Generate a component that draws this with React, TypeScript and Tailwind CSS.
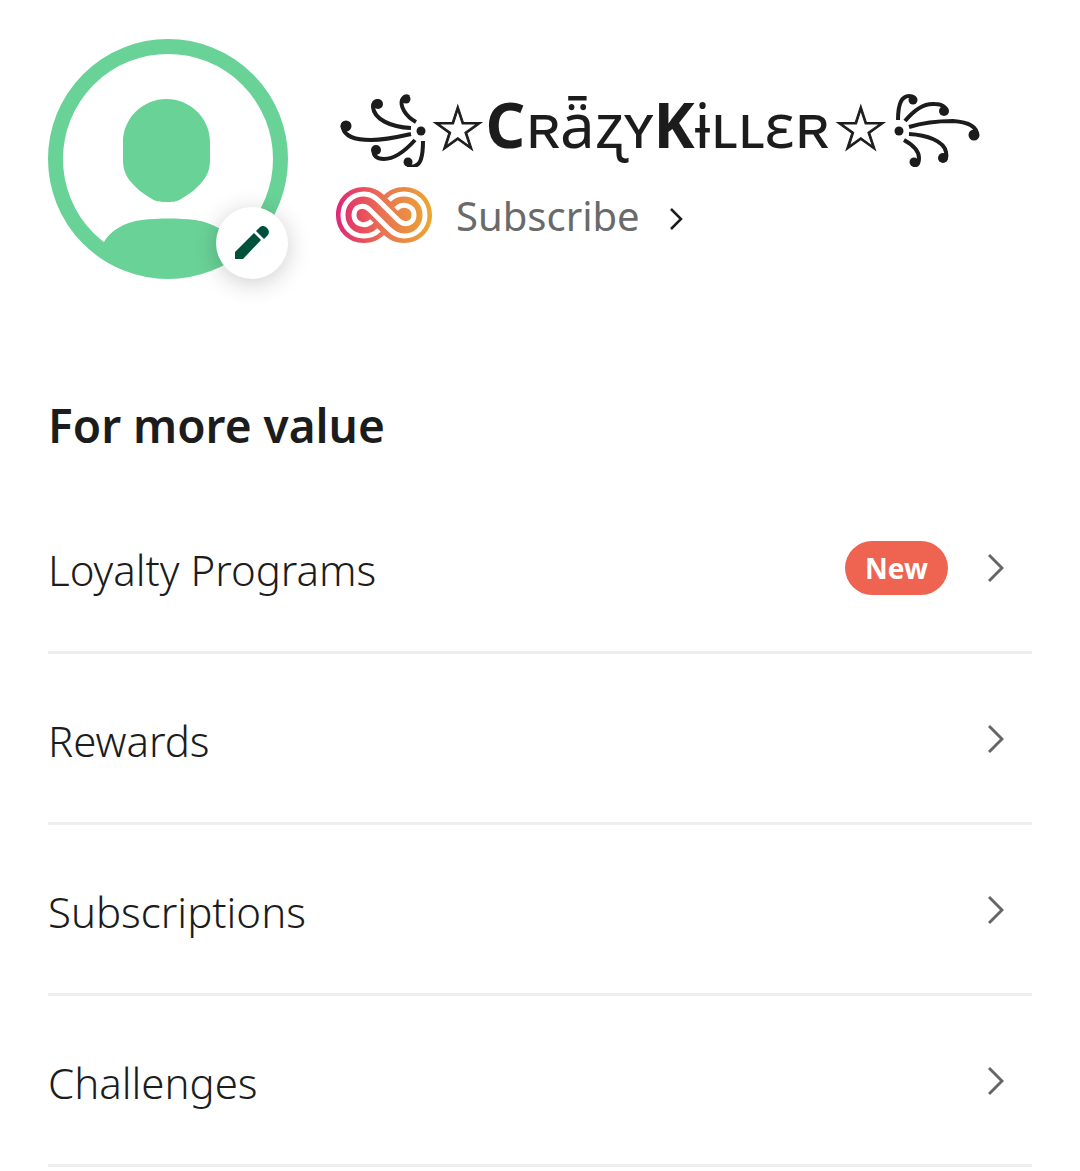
import { useId } from 'react'

interface MenuItem {
  label: string
  href: string
  badge?: string
}

const MENU_ITEMS: MenuItem[] = [
  { label: 'Loyalty Programs', href: '#loyalty', badge: 'New' },
  { label: 'Rewards', href: '#rewards' },
  { label: 'Subscriptions', href: '#subscriptions' },
  { label: 'Challenges', href: '#challenges' },
]

function Avatar() {
  const clipId = useId()

  return (
    <svg className="h-60 w-60" viewBox="0 0 240 240" role="img" aria-label="Profile picture">
      <clipPath id={clipId}>
        <circle cx="120" cy="120" r="119" />
      </clipPath>
      <circle cx="120" cy="120" r="112.5" fill="none" stroke="#69d297" strokeWidth="15" />
      <path
        fill="#69d297"
        d="M118.5 60C142 60 162 79 162 103V121C162 131 159 137 154 143C149 149 142 155 133 160C128 163 124 163 118.5 163C113 163 109 163 104 160C95 155 88 149 83 143C78 137 75 131 75 121V103C75 79 95 60 118.5 60Z"
      />
      <path
        clipPath={`url(#${clipId})`}
        fill="#69d297"
        d="M56 203C62 192 76 183 94 181C111 179 131 179 147 181C166 184 178 192 186 203L200 240H40Z"
      />
    </svg>
  )
}

function PencilIcon() {
  return (
    <svg className="h-9 w-9" viewBox="0 0 36 36" fill="#00513b" aria-hidden="true">
      <path d="M1 27L20 8L27 15L9 34H1Z" />
      <path d="M22 6L25 3C28 0 31 1 33 3C35 5 36 8 33 11L30 14Z" />
    </svg>
  )
}

function InfinityLogo() {
  const gradientId = useId()

  return (
    <svg className="h-14 w-24 shrink-0" viewBox="0 0 96 56" fill="none" aria-hidden="true">
      <linearGradient id={gradientId} gradientUnits="userSpaceOnUse" x1="0" y1="28" x2="96" y2="28">
        <stop offset="0" stopColor="#de2879" />
        <stop offset="0.25" stopColor="#e74b5e" />
        <stop offset="0.5" stopColor="#e87552" />
        <stop offset="1" stopColor="#eca72f" />
      </linearGradient>
      <path
        fill={`url(#${gradientId})`}
        d="M28 0C36 0 43 3 48 8C53 3 60 0 68 0C84 0 96 12 96 28C96 44 84 56 68 56C60 56 53 53 48 48C43 53 36 56 28 56C12 56 0 44 0 28C0 12 12 0 28 0Z"
      />
      <g stroke="#fff" strokeWidth="5">
        <path d="M43 43C39 47 34 49 28 49C16 49 7 40 7 28C7 16 16 7 28 7C35 7 39 10 44 15L62 33C69 40 78 36 78 28C78 19 67 15 60 22" />
        <path d="M53 13C57 9 62 7 68 7C80 7 89 16 89 28C89 40 80 49 68 49C61 49 57 46 52 41L34 23C27 16 18 20 18 28C18 37 29 41 36 34" />
      </g>
    </svg>
  )
}

function FlourishLeft() {
  return (
    <svg className="h-[76px] w-[90px] shrink-0" viewBox="0 0 90 76" fill="none" aria-hidden="true">
      <g stroke="#1c1c1c" strokeWidth="4">
        <path d="M76 31C65 25 60 15 62 9C63 6 66 5 69 6" />
        <path d="M71 37C50 36 34 28 33 16C33 12 35 10 38 10" />
        <path d="M71 43C58 46 46 49 31 49C17 49 5 46 3 37C2 34 4 32 7 32" />
        <path d="M75 49C66 59 56 68 44 68C36 68 33 64 34 60" />
        <path d="M83 50C83 57 83 62 81 68C79 75 72 77 68 74" />
      </g>
      <g fill="#1c1c1c">
        <circle cx="81" cy="40" r="4.5" />
        <circle cx="66" cy="8" r="4.500" />
        <circle cx="38" cy="13" r="5" />
        <circle cx="6" cy="35" r="5.500" />
        <circle cx="36" cy="59" r="5" />
        <circle cx="68" cy="71" r="4.500" />
      </g>
    </svg>
  )
}

function FlourishRight() {
  return (
    <svg className="h-[76px] w-[90px] shrink-0" viewBox="0 0 90 76" fill="none" aria-hidden="true">
      <g stroke="#1c1c1c" strokeWidth="4">
        <path d="M5 29C5 16 8 5 16 5C20 5 22 7 22 10" />
        <path d="M12 30C21 19 32 12 42 13C50 13 54 17 53 21" />
        <path d="M16 36C32 31 46 30 60 30C74 31 84 35 84 44" />
        <path d="M16 43C34 44 51 50 53 61C54 66 53 69 50 69" />
        <path d="M11 49C20 54 26 60 26 67C26 73 24 75 20 74" />
      </g>
      <g fill="#1c1c1c">
        <circle cx="6" cy="40" r="4.5" />
        <circle cx="20" cy="9" r="4.500" />
        <circle cx="51" cy="20" r="5" />
        <circle cx="81" cy="44" r="5.500" />
        <circle cx="50" cy="67" r="5" />
        <circle cx="21" cy="71" r="4.500" />
      </g>
    </svg>
  )
}

function Star() {
  return (
    <span className="font-['DejaVu_Sans',sans-serif] text-[62px] [-webkit-text-stroke:1px_#1c1c1c]">☆</span>
  )
}

export default function App() {
  return (
    <main className="min-h-screen bg-white px-12 pt-[39px] font-['Noto_Sans',sans-serif] text-[#1c1c1c]">
      <header className="flex items-start gap-12">
        <div className="relative h-60 w-60 shrink-0">
          <Avatar />
          <button
            type="button"
            aria-label="Edit profile picture"
            className="absolute right-0 bottom-0 flex h-[72px] w-[72px] items-center justify-center rounded-full bg-white shadow-[0_4px_24px_rgba(0,0,0,0.2)]"
          >
            <PencilIcon />
          </button>
        </div>

        <div className="pt-[52px]">
          <h1 className="flex h-[76px] items-start pl-1 whitespace-nowrap text-[62px] leading-[76px] font-normal">
            <FlourishLeft />
            <Star />
            <span className="mr-1 leading-[66px]">
              <b>C</b>ʀǟʐʏ<b>K</b>ɨʟʟɛʀ
            </span>
            <Star />
            <span className="ml-1">
              <FlourishRight />
            </span>
          </h1>
          <a href="#subscribe" className="mt-5 flex h-14 items-center">
            <InfinityLogo />
            <span className="ml-6 pt-[2px] text-[40px] leading-[56px] text-[#6a6a6a]">Subscribe</span>
            <svg className="mt-2 ml-7 h-6 w-4" viewBox="0 0 16 24" fill="none" stroke="#1c1c1c" strokeWidth="2.500" aria-hidden="true">
              <path d="M3 2L13 12L3 22" />
            </svg>
          </a>
        </div>
      </header>

      <section className="mt-[114px]">
        <h2 className="text-[46px] leading-[64px] font-semibold">For more value</h2>
        <ul className="mt-[26px]">
          {MENU_ITEMS.map((item) => (
            <li key={item.label} className="border-b-[3px] border-[#eeeeee]">
              <a href={item.href} className="flex h-[168px] items-center pt-[2px] pr-7">
                <span className="flex-1 pt-1 text-[42px] leading-[56px] font-light">{item.label}</span>
                {item.badge && (
                  <span className="mr-10 flex h-[54px] items-center rounded-full bg-[#ef6351] px-5 text-[28px] leading-[54px] font-bold text-white">
                    {item.badge}
                  </span>
                )}
                <svg className="h-8 w-4" viewBox="0 0 16 32" fill="none" stroke="#666" strokeWidth="3" aria-hidden="true">
                  <path d="M1 3L14 16L1 29" />
                </svg>
              </a>
            </li>
          ))}
        </ul>
      </section>
    </main>
  )
}
